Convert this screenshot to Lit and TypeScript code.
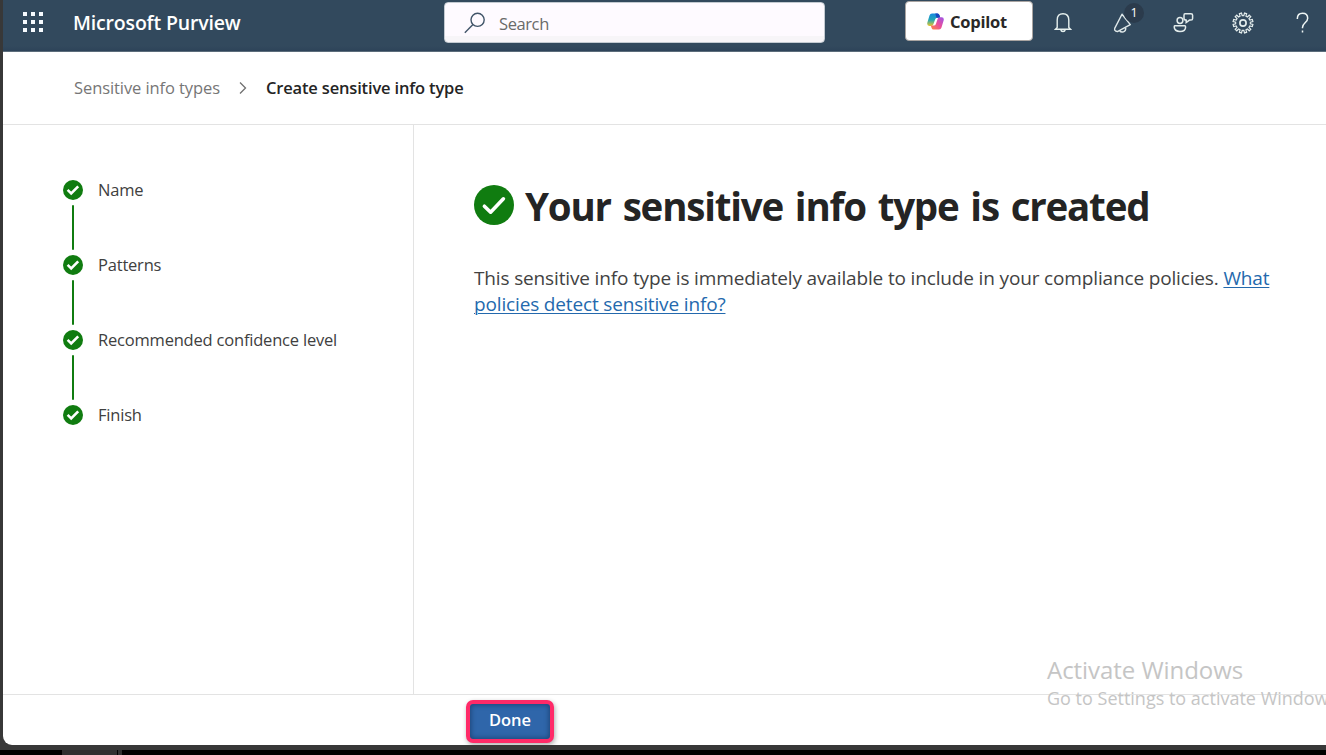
import { LitElement, html, css, svg } from "lit";
import { customElement } from "lit/decorators.js";

const tick = (size: number) => html`<svg width=${size} height=${size} viewBox="0 0 20 20">
  <circle cx="10" cy="10" r="10" fill="#107c10"></circle>
  <path d="M5.2 10.6 8.3 13.6 14.7 6.9" fill="none" stroke="#fff" stroke-width="1.8" stroke-linecap="round" stroke-linejoin="round"></path>
</svg>`;

const smallTick = html`<svg width="20" height="20" viewBox="0 0 20 20">
  <circle cx="10" cy="10" r="10" fill="#107c10"></circle>
  <path d="M4.600 9.900 8.200 13.400 15.200 6.400" fill="none" stroke="#fff" stroke-width="2.600"></path>
</svg>`;

const dots = [0, 8, 16].flatMap((y) =>
  [0, 8, 16].map((x) => svg`<rect x=${x} y=${y} width="4" height="4"></rect>`)
);

const gearPath = (() => {
  const teeth = 12;
  const profile: [number, number][] = [[-0.15, 7.4], [-0.11, 10], [0.11, 10], [0.15, 7.4]];
  let d = "";
  for (let i = 0; i < teeth; i++) {
    profile.forEach(([offset, r], k) => {
      const t = ((i + 0.5) * 2 * Math.PI) / teeth + offset;
      const cmd = i === 0 && k === 0 ? "M" : "L";
      d += `${cmd}${(11 + r * Math.sin(t)).toFixed(2)} ${(11 - r * Math.cos(t)).toFixed(2)}`;
    });
  }
  return d + "Z";
})();

const steps = ["Name", "Patterns", "Recommended confidence level", "Finish"];

@customElement("app-root")
export class AppRoot extends LitElement {
  static styles = css`
    :host {
      display: block; position: relative; width: 1326px; height: 755px; overflow: hidden;
      background: #000; color: #242424; font-family: "Open Sans", "Noto Sans", sans-serif;
    }
    * { box-sizing: border-box; }
    svg { display: block; flex: none; }
    h1, p, ol { margin: 0; padding: 0; }
    .frame { height: 750px; padding: 0 0 5px 3px; background: #383838; }
    .window {
      height: 745px; display: flex; flex-direction: column; background: #fff;
      border-bottom-left-radius: 9px; overflow: hidden;
    }
    .header {
      flex: none; height: 52px; display: flex; background: #32495d;
      border-bottom: 1px solid #5c6d7b; color: #fff;
      background-image: linear-gradient(to bottom, #32495d 46px, #2d4359);
    }
    .header > * { flex: none; }
    .waffle { margin: 12px 0 0 20px; }
    .brand {
      width: 371px; margin-left: 30px; font-size: 19.5px; font-weight: 600; line-height: 46px;
      letter-spacing: -0.17px; white-space: nowrap;
    }
    .search {
      width: 381px; height: 41px; margin-top: 2px; display: flex; border-radius: 4px; border: 1px solid #c3cad1;
      background: linear-gradient(to bottom, #fefaff 33px, #f7f5f8 33px);
      color: #6a6a6a; font-size: 16.5px; letter-spacing: -0.4px; line-height: 42px;
    }
    .search svg { margin: 9px 13px 0 19px; }
    .copilot {
      width: 128px; height: 40px; margin: 1px 0 0 80px; padding-left: 21px; display: flex;
      border: 1px solid #a9a4a1; border-radius: 4px; background: #fff; color: #292827;
      font-size: 16.5px; font-weight: 700; line-height: 39px; letter-spacing: -0.25px;
    }
    .copilot svg { margin: 11px 6px 0 0; }
    .tools { display: flex; }
    .tool { width: 60px; height: 45px; display: flex; justify-content: center; padding-top: 12px; position: relative; }
    .badge {
      position: absolute; left: 31px; top: 3px; width: 20px; height: 20px; border-radius: 10px;
      background: #2b3b4c; text-align: center; font-size: 12.5px; line-height: 19px;
    }
    .crumbs {
      flex: none; height: 73px; padding-left: 71px; display: flex; border-bottom: 1px solid #e3e3e3;
      font-size: 16.5px; line-height: 71px; white-space: nowrap;
    }
    .crumb { width: 164px; color: #767676; letter-spacing: -0.09px; }
    .crumbs svg { margin: 30px 17px 0 -1px; }
    .current { font-weight: 600; letter-spacing: -0.17px; color: #242424; }
    .body { flex: 1; display: flex; min-height: 0; }
    .steps { width: 411px; flex: none; border-right: 1px solid #e3e3e3; padding: 55px 0 0 60px; list-style: none; }
    .step { display: flex; height: 75px; }
    .rail { width: 20px; display: flex; flex-direction: column; align-items: center; gap: 5px; }
    .line { width: 2.500px; height: 45px; background: #107c10; border-radius: 1px; }
    .label { margin-left: 15px; font-size: 16.5px; line-height: 19px; letter-spacing: -0.2px; white-space: nowrap; color: #404040; }
    .main { padding: 60px 0 0 60px; }
    .title { display: flex; }
    .title h1 {
      margin-left: 11px; font-size: 38.5px; line-height: 43px; font-weight: 700;
      letter-spacing: -1.2px; word-spacing: 3px; white-space: nowrap;
    }
    .text { width: 810px; margin-top: 37px; font-size: 19px; line-height: 26px; letter-spacing: -0.15px; color: #424242; }
    .text a { color: #2469ad; text-decoration: underline; text-decoration-thickness: 1px; text-underline-offset: 2px; }
    .footer { flex: none; height: 51px; border-top: 1px solid #e3e3e3; padding: 5px 0 0 463px; }
    .done {
      display: block; width: 88px; height: 43px; padding: 0 0 3px; border: 4px solid #ff2a68; border-radius: 7px;
      background: #2f66aa; color: #fff; font: 600 16.5px/32px "Open Sans", sans-serif; letter-spacing: -0.1px;
      box-shadow: inset 0 0 5px 1px #1d4578, 1px 2px 5px #0005;
    }
    .taskbar { display: flex; height: 5px; padding-left: 62px; gap: 1px; }
    .task { width: 55px; background: #303030; }
    .task.slim { width: 4px; }
    .watermark { position: absolute; left: 1047px; top: 655px; color: #c5c5c5; white-space: nowrap; }
    .watermark .big { font-size: 24px; line-height: 30px; letter-spacing: -0.05px; }
    .watermark .small { font-size: 18px; line-height: 26px; }
  `;

  render() {
    return html`
      <div class="frame">
        <div class="window">
          <header class="header">
            <svg class="waffle" width="20" height="20" viewBox="0 0 20 20" fill="#f7fbff">${dots}</svg>
            <div class="brand">Microsoft Purview</div>
            <div class="search">
              <svg width="22" height="22" viewBox="0 0 22 22" fill="none" stroke="#405468" stroke-width="1.4">
                <circle cx="13.6" cy="7.8" r="6.6"></circle><path d="M9 12.6.8 20.8"></path>
              </svg>
              <span>Search</span>
            </div>
            <div class="copilot">
              <svg width="17" height="17" viewBox="0 0 17 17">
                <defs>
                  <linearGradient id="cool" x1="0" y1="0" x2="0" y2="1"><stop offset="0" stop-color="#168ae0"></stop><stop offset=".5" stop-color="#23a7b5"></stop><stop offset="1" stop-color="#e5c52d"></stop></linearGradient>
                  <linearGradient id="warm" x1="1" y1="0" x2="0" y2="1"><stop offset="0" stop-color="#9a55ea"></stop><stop offset=".5" stop-color="#e94d9c"></stop><stop offset="1" stop-color="#ff8840"></stop></linearGradient>
                </defs>
                <path d="M5 .6h5.500q1.400 0 1.900 1.500l.8 2.700H10.200Q8.600 4.800 8.100 6.400L6.400 11.300Q5.900 12.900 4.200 12.900H2.200Q-.2 12.900.3 9.800L2.500 2.500Q3.100.6 5 .6Z" fill="url(#cool)"></path>
                <path d="M8.300.6h2.200q1.400 0 1.900 1.500l.8 2.700H9.500Z" fill="#1a45bf"></path>
                <path d="M12 16.400H6.500q-1.400 0-1.900-1.500l-.8-2.300h3q1.600 0 2.100-1.600L10.600 5.900q.5-1.700 2.200-1.700h2q2.400 0 1.900 3l-2.200 7.300q-.6 1.900-2.500 1.900Z" fill="url(#warm)"></path>
              </svg>
              <span>Copilot</span>
            </div>
            <div class="tools">
              <div class="tool">
                <svg width="18" height="21" viewBox="0 0 18 21" fill="none" stroke="#e6f0ee" stroke-width="1.4">
                  <path d="M3.200 15.500V8q0-6.300 5.800-6.300T14.800 8v7.500L16.600 17.300H1.400ZM6.700 17.500q.4 2 2.300 2t2.300-2"></path>
                </svg>
              </div>
              <div class="tool">
                <svg width="20" height="22" viewBox="0 0 20 22" fill="none" stroke="#dfe8e9" stroke-width="1.4" stroke-linejoin="round">
                  <path d="M9 2.200 1.700 16.400q-.6 1.700.9 2.600l1.800.6L17.300 12.600ZM9 2.200l3 4M6.500 18.500q1.300 2 4 1.400 2.600-.8 2.200-4.500"></path>
                </svg>
                <span class="badge">1</span>
              </div>
              <div class="tool">
                <svg width="21" height="22" viewBox="0 0 21 22" fill="none" stroke="#e2ebeb" stroke-width="1.500">
                  <circle cx="7" cy="8.500" r="2.900"></circle>
                  <path d="M1.700 13.700h10.100q.8 0 .8 1.200 0 4.500-5.600 4.500T1.200 14.900q0-1.200.5-1.200ZM12 1.700h6q1.600 0 1.600 1.600v3.200q0 1.600-1.600 1.600h-1.500l-3.300 2.400V8.100Q11 8 11 6.500V3.300Q11 1.700 12 1.700Z"></path>
                </svg>
              </div>
              <div class="tool">
                <svg width="22" height="22" viewBox="0 0 22 22" fill="none" stroke="#e2ebeb">
                  <path d=${gearPath} stroke-width="1.200"></path><circle cx="11" cy="11" r="3.100" stroke-width="1.700"></circle>
                </svg>
              </div>
              <div class="tool">
                <svg width="14" height="22" viewBox="0 0 14 22" fill="none" stroke="#eef5f4" stroke-width="1.500">
                  <path d="M1.300 7Q1.300 1.300 6.500 1.300T11.700 6.300Q11.700 8.500 9.100 10.800T6.500 15.500V16.300M6.500 18.500v2"></path>
                </svg>
              </div>
            </div>
          </header>
          <nav class="crumbs">
            <span class="crumb">Sensitive info types</span>
            <svg width="12" height="12" viewBox="0 0 12 12" fill="none" stroke="#707070" stroke-width="1.300"><path d="M3 .5 8.500 6 3 11.500"></path></svg>
            <span class="current">Create sensitive info type</span>
          </nav>
          <div class="body">
            <ol class="steps">
              ${steps.map((label, i) => html`<li class="step">
                <div class="rail">${smallTick}${i < steps.length - 1 ? html`<div class="line"></div>` : null}</div>
                <span class="label">${label}</span>
              </li>`)}
            </ol>
            <main class="main">
              <div class="title">${tick(40)}<h1>Your sensitive info type is created</h1></div>
              <p class="text">This sensitive info type is immediately available to include in your compliance policies. <a>What policies detect sensitive info?</a></p>
            </main>
          </div>
          <footer class="footer"><button class="done">Done</button></footer>
        </div>
      </div>
      <div class="taskbar"><div class="task"></div><div class="task slim"></div></div>
      <div class="watermark">
        <div class="big">Activate Windows</div>
        <div class="small">Go to Settings to activate Windows.</div>
      </div>
    `;
  }
}
